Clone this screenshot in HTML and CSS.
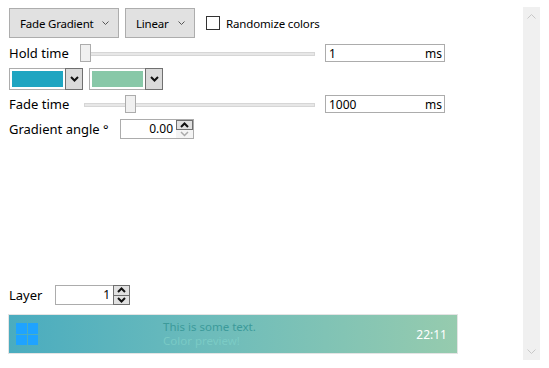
FILE: index.html
```html
<!DOCTYPE html>
<html>
<head>
<meta charset="utf-8">
<link rel="stylesheet" href="styles.css">
</head>
<body>
<div class="page">
  <div class="main">
    <div class="row row-top">
      <div class="btn btn-mode"><span>Fade Gradient</span><svg class="chev" width="7" height="4" viewBox="0 0 7 4"><path d="M0.5 0.5 L3.5 3.5 L6.5 0.5" fill="none" stroke="#555" stroke-width="1"/></svg></div>
      <div class="btn btn-lin"><span>Linear</span><svg class="chev" width="7" height="4" viewBox="0 0 7 4"><path d="M0.5 0.5 L3.5 3.5 L6.5 0.5" fill="none" stroke="#555" stroke-width="1"/></svg></div>
      <label class="check"><span class="box"></span><span>Randomize colors</span></label>
    </div>

    <div class="row row-hold">
      <span class="lbl lbl-hold">Hold time</span>
      <div class="slider slider-hold"><div class="track"></div><div class="thumb" style="left:0px"></div></div>
      <div class="txt"><span>1</span><span>ms</span></div>
    </div>

    <div class="row row-colors">
      <div class="combo"><div class="swatch sw1"></div><div class="drop"><svg width="9" height="6" viewBox="0 0 9 6"><path d="M1 1 L4.5 4.5 L8 1" fill="none" stroke="#111" stroke-width="2"/></svg></div></div>
      <div class="combo"><div class="swatch sw2"></div><div class="drop"><svg width="9" height="6" viewBox="0 0 9 6"><path d="M1 1 L4.5 4.5 L8 1" fill="none" stroke="#111" stroke-width="2"/></svg></div></div>
    </div>

    <div class="row row-fade">
      <span class="lbl lbl-fade">Fade time</span>
      <div class="slider slider-fade"><div class="track"></div><div class="thumb" style="left:41px"></div></div>
      <div class="txt"><span>1000</span><span>ms</span></div>
    </div>

    <div class="row row-angle">
      <span class="lbl lbl-angle">Gradient angle °</span>
      <div class="num num-angle">
        <span class="val">0.00</span>
        <div class="spin">
          <div class="sb sb-up"><svg width="9" height="6" viewBox="0 0 9 6"><path d="M1 5 L4.5 1.5 L8 5" fill="none" stroke="#111" stroke-width="2"/></svg></div>
          <div class="sb dis"><svg width="9" height="6" viewBox="0 0 9 6"><path d="M1 1 L4.5 4.5 L8 1" fill="none" stroke="#aaa" stroke-width="1.5"/></svg></div>
        </div>
      </div>
    </div>

    <div class="spacer"></div>

    <div class="row row-layer">
      <span class="lbl lbl-layer">Layer</span>
      <div class="num num-layer">
        <span class="val">1</span>
        <div class="spin spin-b">
          <div class="sb"><svg width="9" height="6" viewBox="0 0 9 6"><path d="M1 5 L4.5 1.5 L8 5" fill="none" stroke="#111" stroke-width="2"/></svg></div>
          <div class="sb"><svg width="9" height="6" viewBox="0 0 9 6"><path d="M1 1 L4.5 4.5 L8 1" fill="none" stroke="#111" stroke-width="2"/></svg></div>
        </div>
      </div>
    </div>

    <div class="preview">
      <div class="logo"><i></i><i></i><i></i><i></i></div>
      <div class="ptext"><div class="p1">This is some text.</div><div class="p2">Color preview!</div></div>
      <div class="clock">22:11</div>
    </div>
  </div>

  <div class="scroll">
    <svg width="9" height="5" viewBox="0 0 9 5"><path d="M0.5 4.5 L4.5 0.5 L8.5 4.5" fill="none" stroke="#c8c8c8" stroke-width="1"/></svg>
    <svg width="9" height="5" viewBox="0 0 9 5"><path d="M0.5 0.5 L4.5 4.5 L8.5 0.5" fill="none" stroke="#c8c8c8" stroke-width="1"/></svg>
  </div>
</div>
</body>
</html>
```

FILE: styles.css
```css
* { box-sizing: border-box; }
html, body { margin: 0; padding: 0; background: #fff; }
body {
  font-family: "Noto Sans", "Open Sans", sans-serif;
  font-size: 13px;
  color: #000;
  width: 549px;
  height: 368px;
  overflow: hidden;
}
.page {
  display: flex;
  padding: 8px 0 0 9px;
  height: 368px;
}
.main {
  width: 450px;
  display: flex;
  flex-direction: column;
}
.row { display: flex; align-items: center; }

.row-top { height: 30px; }
.btn {
  height: 30px;
  border: 1px solid #adadad;
  background: #e1e1e1;
  display: flex;
  align-items: center;
  font-size: 11.5px;
  letter-spacing: -0.2px;
  padding-left: 10px;
  position: relative;
}
.btn-mode { width: 110px; }
.btn-lin { width: 70px; margin-left: 6px; }
.chev { position: absolute; right: 9px; top: 12px; }
.check { display: flex; align-items: center; margin-left: 11px; font-size: 11.5px; letter-spacing: -0.15px; }
.check .box {
  width: 14px; height: 14px;
  border: 1px solid #333;
  background: #fff;
  margin-right: 6px;
}

.row-hold { margin-top: 6px; height: 18px; }
.lbl { white-space: nowrap; }
.lbl-hold { width: 71px; }
.lbl-fade { width: 75px; }
.slider { position: relative; height: 18px; }
.slider-hold { width: 235px; }
.slider-fade { width: 231px; }
.track {
  position: absolute; left: 0; right: 0; top: 8px;
  height: 4px;
  background: #e7e7e7;
  border: 1px solid #d6d6d6;
}
.thumb {
  position: absolute; top: 0;
  width: 11px; height: 18px;
  background: #f0f0f0;
  border: 1px solid #acacac;
}
.txt {
  margin-left: 10px;
  width: 120px; height: 18px;
  border: 1px solid #acacac;
  display: flex; justify-content: space-between; align-items: center;
  padding: 0 2px 0 3px;
  font-size: 12px;
}

.row-colors { margin-top: 6px; height: 22px; }
.combo {
  width: 74px; height: 22px;
  border: 1px solid #acacac;
  display: flex;
  margin-right: 6px;
}
.swatch { flex: 1; margin: 2px; }
.sw1 { background: #1fa5c1; }
.sw2 { background: #88c8a8; }
.drop {
  width: 18px;
  background: #dadada;
  border: 1px solid #707070;
  margin: -1px -1px -1px 0;
  display: flex; align-items: center; justify-content: center;
}

.row-fade { margin-top: 5px; height: 18px; }

.row-angle { margin-top: 6px; height: 20px; }
.lbl-angle { width: 111px; }
.num {
  height: 20px;
  border: 1px solid #acacac;
  display: flex;
  align-items: stretch;
}
.num .val { flex: 1; text-align: right; font-size: 12px; line-height: 18px; padding-right: 3px; }
.num-angle { width: 74px; }
.spin { width: 17px; display: flex; flex-direction: column; }
.sb { flex: 1; background: #e1e1e1; display: flex; align-items: center; justify-content: center; }
.sb-up { border: 1px solid #6f6f6f; }
.sb.dis { background: #f4f4f4; }
.spin-b { border: 1px solid #6f6f6f; margin: -1px -1px -1px 0; }
.spin-b .sb + .sb { border-top: 1px solid #6f6f6f; }

.spacer { height: 146px; }

.row-layer { height: 20px; }
.lbl-layer { width: 46px; }
.num-layer { width: 75px; }

.preview {
  margin-top: 9px;
  margin-left: -1px;
  width: 450px; height: 40px;
  background: linear-gradient(90deg, #4aacbf 0%, #6dbcbb 45%, #96cbae 100%);
  border: 1px solid #e4e4e4;
  position: relative;
  display: flex;
  align-items: center;
}
.logo {
  margin-left: 7px;
  width: 22px; height: 22px;
  display: grid;
  grid-template-columns: 1fr 1fr;
  gap: 1px;
}
.logo i { background: #1fa3ff; }
.ptext { margin-left: 125px; font-size: 11.5px; line-height: 14px; }
.p1 { color: #3c9a9a; }
.p2 { color: #7fcfc8; opacity: 0.8; }
.clock { margin-left: auto; margin-right: 10px; color: #fff; font-size: 12px; }

.scroll {
  margin-left: 64px;
  margin-top: -1px;
  width: 17px;
  height: 353px;
  background: #f0f0f0;
  display: flex;
  flex-direction: column;
  justify-content: space-between;
  align-items: center;
  padding: 7px 0 6px;
}
```
